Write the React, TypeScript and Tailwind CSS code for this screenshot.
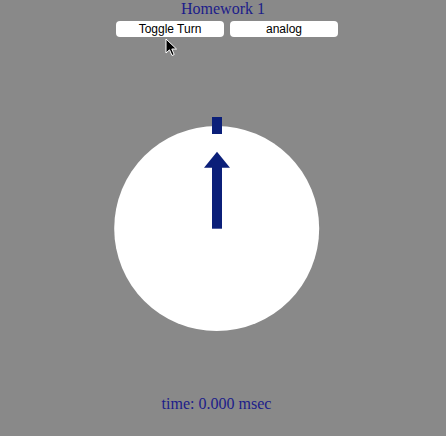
import React from 'react';

const serif = { fontFamily: '"Liberation Serif", "Times New Roman", serif' };
const sans = { fontFamily: '"Liberation Sans", Arial, sans-serif' };

export default function App() {
  return (
    <div className="relative w-full h-[436px] bg-[#898989] flex flex-col items-center overflow-hidden">
      <h1 className="text-[16px] leading-[17px] text-[#1c1c8a]" style={serif}>Homework 1</h1>
      <div className="flex gap-[6px] mt-[4px] ml-[8px]">
        <button className="w-[108px] h-[16px] bg-white rounded-[4px] text-[12px] leading-[16px] text-black" style={sans}>Toggle Turn</button>
        <button className="w-[108px] h-[16px] bg-white rounded-[4px] text-[12px] leading-[16px] text-black" style={sans}>analog</button>
      </div>
      <svg width="446" height="355" className="mt-[3px] block">
        <circle cx="216.7" cy="188.5" r="102.5" fill="#ffffff" />
        <rect x="212" y="77" width="10" height="17" fill="#0b1f79" />
        <polygon points="204,127.7 230,127.7 217,111.7" fill="#0b1f79" />
        <rect x="212" y="127" width="10" height="61.7" fill="#0b1f79" />
      </svg>
      <div className="self-start w-[433px] text-center text-[16px] leading-[17px] text-[#1c1c8a]" style={serif}>time: 0.000 msec</div>
      <svg className="absolute left-[165px] top-[38px]" width="14" height="20" viewBox="0 0 14 20">
        <path d="M1 1 L1 15 L4.5 11.8 L7 17.5 L9.2 16.5 L6.8 11 L11.5 11 Z" fill="#000" stroke="#fff" strokeWidth="1" strokeLinejoin="round" />
      </svg>
    </div>
  );
}
